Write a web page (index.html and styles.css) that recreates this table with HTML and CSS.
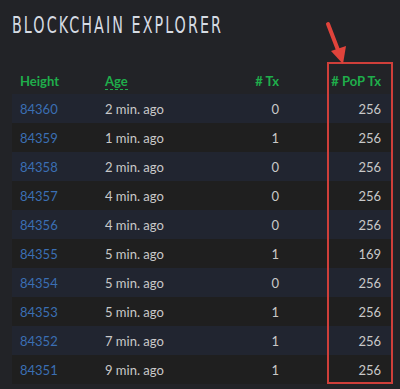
FILE: index.html
```html
<!DOCTYPE html>
<html lang="en">
<head>
    <meta charset="UTF-8">
    <title>Blockchain Explorer</title>
    <link rel="stylesheet" href="styles.css">
</head>
<body>
    <div class="explorer">
        <h1 class="title"><span class="title-text">BLOCKCHAIN EXPLORER</span></h1>
        <table class="blocks">
            <colgroup>
                <col class="c-height">
                <col class="c-age">
                <col class="c-tx">
                <col class="c-pop">
            </colgroup>
            <thead>
                <tr>
                    <th>Height</th>
                    <th><span class="hint">Age</span></th>
                    <th class="num"># Tx</th>
                    <th class="num pop"># PoP Tx</th>
                </tr>
            </thead>
            <tbody>
                <tr><td><a href="#">84360</a></td><td>2 min. ago</td><td class="num">0</td><td class="num pop">256</td></tr>
                <tr><td><a href="#">84359</a></td><td>1 min. ago</td><td class="num">1</td><td class="num pop">256</td></tr>
                <tr><td><a href="#">84358</a></td><td>2 min. ago</td><td class="num">0</td><td class="num pop">256</td></tr>
                <tr><td><a href="#">84357</a></td><td>4 min. ago</td><td class="num">0</td><td class="num pop">256</td></tr>
                <tr><td><a href="#">84356</a></td><td>4 min. ago</td><td class="num">0</td><td class="num pop">256</td></tr>
                <tr><td><a href="#">84355</a></td><td>5 min. ago</td><td class="num">1</td><td class="num pop">169</td></tr>
                <tr><td><a href="#">84354</a></td><td>5 min. ago</td><td class="num">0</td><td class="num pop">256</td></tr>
                <tr><td><a href="#">84353</a></td><td>5 min. ago</td><td class="num">1</td><td class="num pop">256</td></tr>
                <tr><td><a href="#">84352</a></td><td>7 min. ago</td><td class="num">1</td><td class="num pop">256</td></tr>
                <tr><td><a href="#">84351</a></td><td>9 min. ago</td><td class="num">1</td><td class="num pop">256</td></tr>
            </tbody>
        </table>

        <!-- annotation -->
        <div class="highlight"></div>
        <svg class="arrow" width="30" height="50" viewBox="0 0 30 50">
            <line x1="6" y1="4" x2="16" y2="30" stroke="#e0433b" stroke-width="4" stroke-linecap="round"/>
            <polygon points="9,31 24,26 21,44" fill="#e0433b"/>
        </svg>
    </div>
</body>
</html>
```

FILE: styles.css
```css
html, body {
    margin: 0;
    background-color: #222327;
}
body {
    font-family: Lato, "Open Sans", sans-serif;
    font-size: 13px;
    color: #c9c9c9;
}
.explorer {
    position: relative;
    padding: 12px 8px 0 12px;
}
.title {
    margin: 0;
    font-family: "DejaVu Sans Condensed", "DejaVu Sans", sans-serif;
    font-weight: normal;
    font-size: 23px;
    line-height: 26px;
    color: #d6dbe3;
    white-space: nowrap;
}
.title-text {
    display: inline-block;
    letter-spacing: 3px;
    transform: scaleX(0.69);
    transform-origin: left center;
}
.blocks {
    margin-top: 24px;
    width: 380px;
    table-layout: fixed;
    border-collapse: collapse;
}
.c-height { width: 85px; }
.c-age { width: 103px; }
.c-tx { width: 87px; }
.c-pop { width: 105px; }
.blocks th,
.blocks td {
    padding: 0 8px;
    text-align: left;
    white-space: nowrap;
}
.blocks th {
    height: 26px;
    padding-top: 6px;
    color: #1fae4b;
    font-weight: bold;
}
.blocks td {
    height: 29px;
}
.blocks .num {
    text-align: right;
}
.blocks .pop {
    padding-right: 11px;
}
.hint {
    border-bottom: 1px dashed #1fae4b;
}
.blocks tbody tr:nth-child(odd) {
    background-color: #212530;
}
.blocks tbody tr:nth-child(even) {
    background-color: #1f1f1f;
}
.blocks a {
    color: #3b6fb4;
    text-decoration: none;
}
.highlight {
    position: absolute;
    left: 327px;
    top: 62px;
    width: 62px;
    height: 318px;
    border: 2px solid #cf3f3a;
}
.arrow {
    position: absolute;
    left: 322px;
    top: 20px;
}
```
